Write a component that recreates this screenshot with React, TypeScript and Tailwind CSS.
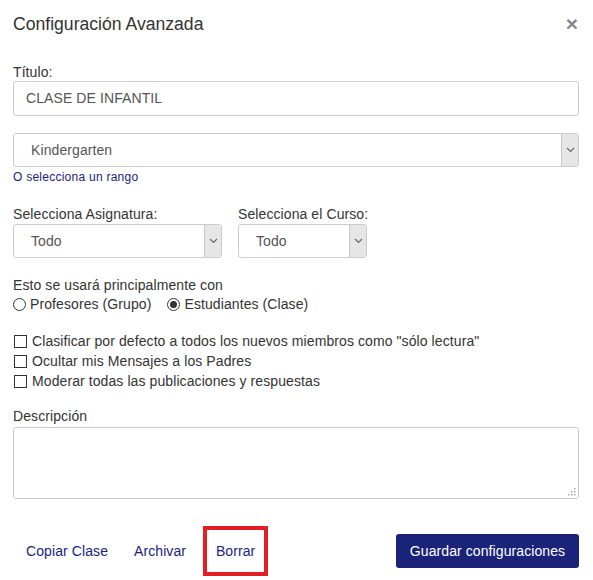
import React from "react";

function Chevron() {
  return (
    <svg width="9" height="6" viewBox="0 0 9 6" fill="none">
      <path d="M1 1 L4.5 4.5 L8 1" stroke="#666" strokeWidth="1.1" />
    </svg>
  );
}

function Select({ value, className, textPl }: { value: string; className: string; textPl: string }) {
  return (
    <div className={`flex items-stretch border border-[#ccc] rounded-[3px] bg-white overflow-hidden ${className}`}>
      <div className={`flex-1 flex items-center text-[14px] text-[#555] ${textPl}`}>{value}</div>
      <div className="w-[17px] bg-[#e6e6e6] border-l border-[#c8c8c8] flex items-center justify-center">
        <Chevron />
      </div>
    </div>
  );
}

function Checkbox({ label }: { label: string }) {
  return (
    <div className="h-[20px] flex items-center">
      <span className="w-[13px] h-[13px] border border-[#333] bg-white mr-[5px] ml-[1px]" />
      <span>{label}</span>
    </div>
  );
}

export default function App() {
  return (
    <div
      className="w-[593px] h-[580px] bg-white text-[#333] text-[14px] tracking-[0.09px] pl-[13px] pr-[14px] flex flex-col"
      style={{ fontFamily: '"Liberation Sans", Arial, sans-serif' }}
    >
      <div className="pt-[14px] flex justify-between items-start">
        <div className="text-[17.6px] tracking-normal leading-[20px] text-[#333]">Configuración Avanzada</div>
        <div className="text-[21px] leading-[14px] font-bold text-[#888] mt-[3px] mr-[1px]">×</div>
      </div>

      <div className="mt-[29px] h-[18px] leading-[18px]">Título:</div>
      <div className="h-[35px] border border-[#ccc] rounded-[3px] flex items-center pl-[12px] text-[14px] text-[#555]">
        CLASE DE INFANTIL
      </div>

      <Select value="Kindergarten" className="mt-[17px] h-[34px]" textPl="pl-[17px]" />
      <div className="mt-[2px] h-[16px] leading-[16px] text-[12px] tracking-[0.25px] text-[#1a237e]">O selecciona un rango</div>

      <div className="mt-[20px] flex gap-[16px]">
        <div className="flex flex-col w-[209px]">
          <div className="h-[18px] leading-[18px]">Selecciona Asignatura:</div>
          <Select value="Todo" className="mt-[1px] h-[34px]" textPl="pl-[17px]" />
        </div>
        <div className="flex flex-col w-[129px]">
          <div className="h-[18px] leading-[18px] whitespace-nowrap">Selecciona el Curso:</div>
          <Select value="Todo" className="mt-[1px] h-[34px]" textPl="pl-[17px]" />
        </div>
      </div>

      <div className="mt-[18px] h-[19px] leading-[19px]">Esto se usará principalmente con</div>
      <div className="h-[19px] flex items-center">
        <span className="w-[13px] h-[13px] rounded-full border border-[#333] mr-[4px]" />
        <span>Profesores (Grupo)</span>
        <span className="w-[13px] h-[13px] rounded-full border border-[#333] ml-[16px] mr-[4px] flex items-center justify-center">
          <span className="w-[7px] h-[7px] rounded-full bg-[#333]" />
        </span>
        <span>Estudiantes (Clase)</span>
      </div>

      <div className="mt-[17px] flex flex-col">
        <Checkbox label={'Clasificar por defecto a todos los nuevos miembros como "sólo lectura"'} />
        <Checkbox label="Ocultar mis Mensajes a los Padres" />
        <Checkbox label="Moderar todas las publicaciones y respuestas" />
      </div>

      <div className="mt-[16px] h-[18px] leading-[18px]">Descripción</div>
      <div className="mt-[2px] h-[72px] border border-[#ccc] rounded-[3px] relative">
        <svg className="absolute right-[2px] bottom-[2px]" width="8" height="8" viewBox="0 0 8 8">
          <rect x="6" y="0" width="1.5" height="1.5" fill="#aaa" />
          <rect x="3" y="3" width="1.5" height="1.5" fill="#aaa" />
          <rect x="6" y="3" width="1.5" height="1.5" fill="#aaa" />
          <rect x="0" y="6" width="1.5" height="1.5" fill="#aaa" />
          <rect x="3" y="6" width="1.5" height="1.5" fill="#aaa" />
          <rect x="6" y="6" width="1.5" height="1.5" fill="#aaa" />
        </svg>
      </div>

      <div className="mt-[27px] flex items-center justify-between">
        <div className="flex items-center text-[#1a237e]">
          <span className="px-[13px]">Copiar Clase</span>
          <span className="px-[13px]">Archivar</span>
          <span className="ml-[4px] w-[65px] h-[50px] border-4 border-[#e31e24] flex items-center justify-center">
            Borrar
          </span>
        </div>
        <div className="w-[183px] h-[34px] rounded-[3px] bg-[#1b2379] text-white text-[14px] flex items-center justify-center">
          Guardar configuraciones
        </div>
      </div>
    </div>
  );
}
